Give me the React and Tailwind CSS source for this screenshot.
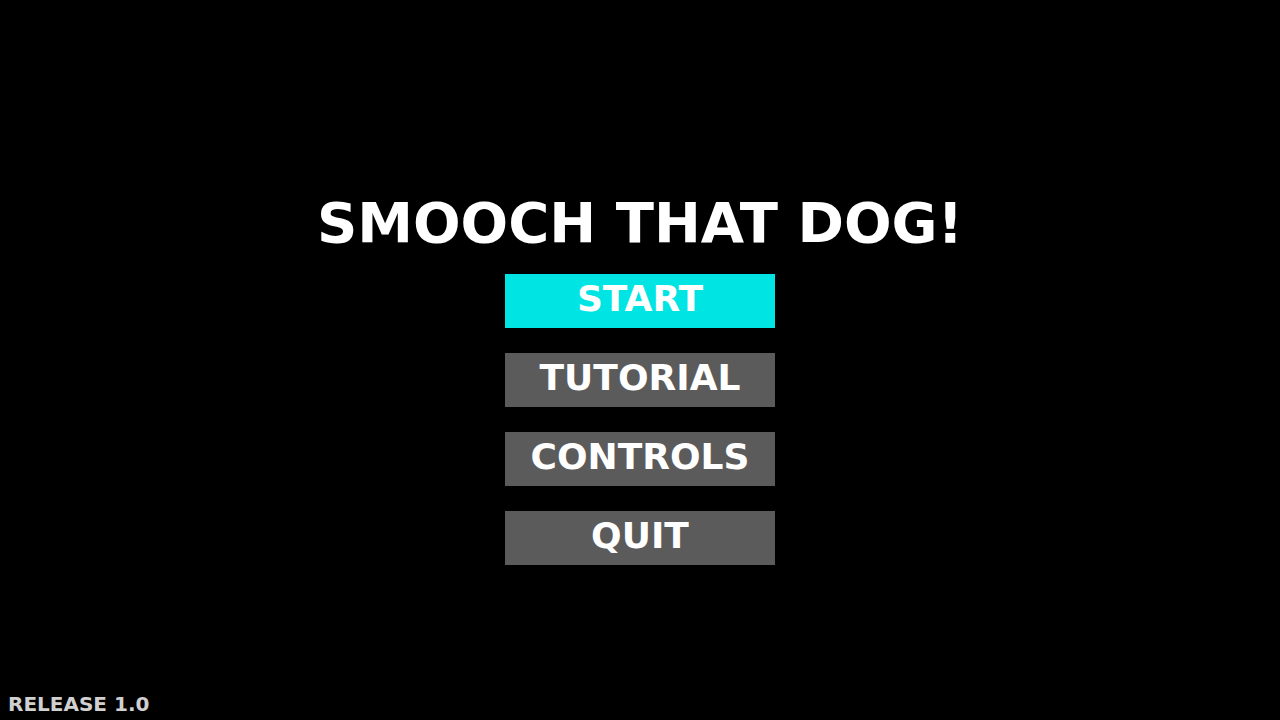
import React, { useState } from "react";

const MENU_ITEMS = ["START", "TUTORIAL", "CONTROLS", "QUIT"];

export default function App() {
  const [selected, setSelected] = useState("START");

  return (
    <div className="flex min-h-screen flex-col bg-black font-['DejaVu_Sans',sans-serif] font-bold text-white">
      <main className="flex flex-1 flex-col items-center px-4 pt-48">
        <h1 className="mb-5 text-center text-[56px] leading-[62px]">
          SMOOCH THAT DOG!
        </h1>

        <nav className="flex flex-col gap-[25px]">
          {MENU_ITEMS.map((item) => (
            <button
              key={item}
              type="button"
              onClick={() => setSelected(item)}
              onMouseEnter={() => setSelected(item)}
              className={`h-[54px] w-[270px] pb-1 text-4xl leading-none ${
                selected === item ? "bg-[#00e4e4]" : "bg-[#5b5b5b]"
              }`}
            >
              {item}
            </button>
          ))}
        </nav>
      </main>

      <footer className="px-2 pb-1 text-xl leading-6 text-[#d0d0d0]">RELEASE 1.0</footer>
    </div>
  );
}
